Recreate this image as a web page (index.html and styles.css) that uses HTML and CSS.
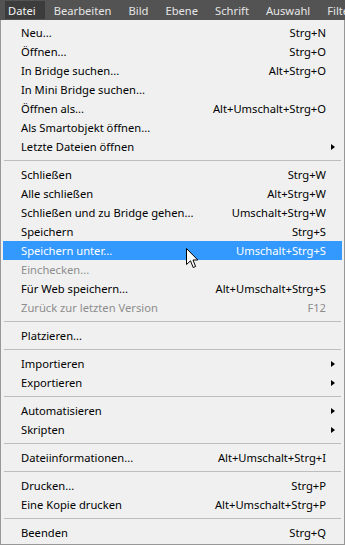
FILE: index.html
```html
<!DOCTYPE html>
<html>
<head>
    <title>Datei</title>
    <link rel="stylesheet" href="styles.css">
</head>
<body>
    <!-- Menu bar -->
    <div class="menubar">
        <span class="top-item open">Datei</span>
        <span class="top-item">Bearbeiten</span>
        <span class="top-item">Bild</span>
        <span class="top-item">Ebene</span>
        <span class="top-item">Schrift</span>
        <span class="top-item">Auswahl</span>
        <span class="top-item">Filter</span>
    </div>

    <!-- File menu -->
    <ul class="menu">
        <li class="item"><span>Neu...</span><span class="key">Strg+N</span></li>
        <li class="item"><span>Öffnen...</span><span class="key">Strg+O</span></li>
        <li class="item"><span>In Bridge suchen...</span><span class="key">Alt+Strg+O</span></li>
        <li class="item"><span>In Mini Bridge suchen...</span></li>
        <li class="item"><span>Öffnen als...</span><span class="key">Alt+Umschalt+Strg+O</span></li>
        <li class="item"><span>Als Smartobjekt öffnen...</span></li>
        <li class="item sub"><span>Letzte Dateien öffnen</span><span class="key"></span><span class="arrow"></span></li>
        <li class="sep"></li>
        <li class="item"><span>Schließen</span><span class="key">Strg+W</span></li>
        <li class="item"><span>Alle schließen</span><span class="key">Alt+Strg+W</span></li>
        <li class="item"><span>Schließen und zu Bridge gehen...</span><span class="key">Umschalt+Strg+W</span></li>
        <li class="item"><span>Speichern</span><span class="key">Strg+S</span></li>
        <li class="item active"><span>Speichern unter...</span><span class="key">Umschalt+Strg+S</span></li>
        <li class="item disabled"><span>Einchecken...</span></li>
        <li class="item"><span>Für Web speichern...</span><span class="key">Alt+Umschalt+Strg+S</span></li>
        <li class="item disabled"><span>Zurück zur letzten Version</span><span class="key">F12</span></li>
        <li class="sep"></li>
        <li class="item"><span>Platzieren...</span></li>
        <li class="sep"></li>
        <li class="item sub"><span>Importieren</span><span class="key"></span><span class="arrow"></span></li>
        <li class="item sub"><span>Exportieren</span><span class="key"></span><span class="arrow"></span></li>
        <li class="sep"></li>
        <li class="item sub"><span>Automatisieren</span><span class="key"></span><span class="arrow"></span></li>
        <li class="item sub"><span>Skripten</span><span class="key"></span><span class="arrow"></span></li>
        <li class="sep"></li>
        <li class="item"><span>Dateiinformationen...</span><span class="key">Alt+Umschalt+Strg+I</span></li>
        <li class="sep"></li>
        <li class="item"><span>Drucken...</span><span class="key">Strg+P</span></li>
        <li class="item"><span>Eine Kopie drucken</span><span class="key">Alt+Umschalt+Strg+P</span></li>
        <li class="sep"></li>
        <li class="item"><span>Beenden</span><span class="key">Strg+Q</span></li>
    </ul>

    <!-- Mouse pointer over the highlighted row -->
    <svg class="cursor" width="13" height="21" viewBox="0 0 13 21">
        <path d="M0.5 0.5 L0.5 16.5 L4.5 12.8 L7.2 19.5 L9.6 18.5 L7 12 L11.8 12 Z" fill="#fff" stroke="#000" stroke-width="1" stroke-linejoin="miter"/>
    </svg>
</body>
</html>
```

FILE: styles.css
```css
body {
    margin: 0;
    width: 345px;
    height: 545px;
    overflow: hidden;
    background-color: #f0f0f0;
    font-family: "Noto Sans", sans-serif;
    font-size: 11.2px;
    position: relative;
}
.menubar {
    display: flex;
    height: 20px;
    background-color: #535353;
    padding-left: 5px;
    white-space: nowrap;
    overflow: hidden;
}
.top-item {
    display: flex;
    align-items: center;
    height: 18px;
    margin-top: 1px;
    padding: 0 4px;
    margin-right: 9px;
    color: #e6e6e6;
}
.top-item.open {
    background-color: #3c3c3c;
    padding: 0 9px 0 3px;
    margin-right: 5px;
    color: #f4f4f4;
}
.menu {
    list-style: none;
    margin: 0;
    padding: 3px 2px 2px 2px;
    height: 525px;
    box-sizing: border-box;
    border: 1px solid #979797;
    border-top: none;
    background-color: #f0f0f0;
}
.item {
    display: grid;
    grid-template-columns: 1fr auto 16px;
    align-items: center;
    height: 19px;
    padding-left: 18px;
    color: #000;
    white-space: nowrap;
}
.item.active {
    background-color: #3399ff;
    color: #fff;
}
.item.disabled {
    color: #8d8d8d;
}
.arrow {
    width: 0;
    height: 0;
    margin-left: 5px;
    border-top: 3.5px solid transparent;
    border-bottom: 3.5px solid transparent;
    border-left: 4px solid #000;
}
.sep {
    height: 1px;
    margin: 4px 1px 4px 1px;
    background-color: #bdbdbd;
}
.cursor {
    position: absolute;
    left: 186px;
    top: 248px;
}
```
